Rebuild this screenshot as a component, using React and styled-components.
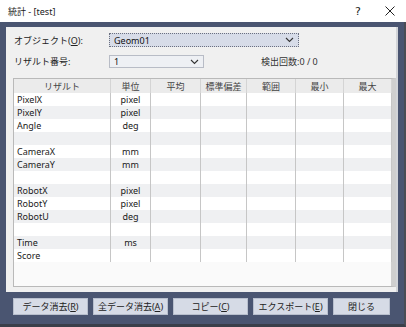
import React from "react";
import styled, { createGlobalStyle } from "styled-components";

const rows = [
  ["PixelX", "pixel"],
  ["PixelY", "pixel"],
  ["Angle", "deg"],
  ["", ""],
  ["CameraX", "mm"],
  ["CameraY", "mm"],
  ["", ""],
  ["RobotX", "pixel"],
  ["RobotY", "pixel"],
  ["RobotU", "deg"],
  ["", ""],
  ["Time", "ms"],
  ["Score", ""],
];

const headers = ["リザルト", "単位", "平均", "標準偏差", "範囲", "最小", "最大"];

const Chevron = () => (
  <svg width="9" height="6" viewBox="0 0 9 6">
    <path d="M1 1 L4.5 4.5 L8 1" fill="none" stroke="#333" strokeWidth="1.1" />
  </svg>
);

const CloseIcon = () => (
  <svg width="10" height="10" viewBox="0 0 10 10">
    <path d="M0.5 0.5 L9.5 9.5 M9.5 0.5 L0.5 9.5" stroke="#222" strokeWidth="1" />
  </svg>
);

export default function App() {
  return (
    <Window>
      <GlobalStyle />
      <TitleBar>
        <Title>統計 - [test]</Title>
        <TitleButtons>
          <TitleButton>?</TitleButton>
          <TitleButton>
            <CloseIcon />
          </TitleButton>
        </TitleButtons>
      </TitleBar>
      <Panel>
        <FormRow>
          <Label>
            オブジェクト(<u>O</u>):
          </Label>
          <Combo $focused $width={190}>
            <span>Geom01</span>
            <Chevron />
          </Combo>
        </FormRow>
        <FormRow $second>
          <Label>リザルト番号:</Label>
          <Combo $width={95}>
            <span>1</span>
            <Chevron />
          </Combo>
          <Count>検出回数:0 / 0</Count>
        </FormRow>
        <Table>
          <Grid>
            {headers.map((h) => (
              <HeadCell key={h}>{h}</HeadCell>
            ))}
            {rows.map((r, i) =>
              headers.map((h, c) => (
                <Cell key={i + h} $alt={i % 2 === 1} $center={c === 1}>
                  {c === 0 ? r[0] : c === 1 ? r[1] : ""}
                </Cell>
              ))
            )}
          </Grid>
        </Table>
      </Panel>
      <Footer>
        <Button $w={75}>
          データ消去(<u>R</u>)
        </Button>
        <Button $w={75}>
          全データ消去(<u>A</u>)
        </Button>
        <Button $w={75}>
          コピー(<u>C</u>)
        </Button>
        <Button $w={75}>
          エクスポート(<u>E</u>)
        </Button>
        <Button $w={57}>閉じる</Button>
      </Footer>
    </Window>
  );
}

const GlobalStyle = createGlobalStyle`
  body {
    margin: 0;
    background: #485470;
    font-family: "Noto Sans", "Noto Sans CJK JP", sans-serif;
    font-size: 9px;
    color: #1a1a1a;
  }
  u { text-underline-offset: 1px; }
`;

const Window = styled.div`
  width: 406px;
  height: 327px;
  display: flex;
  flex-direction: column;
  background: #4a5571;
  box-sizing: border-box;
  border-bottom: 3px solid #3a3f4a;
  border-right: 2px solid #4a4d55;
`;

const TitleBar = styled.div`
  height: 22px;
  background: #ffffff;
  display: flex;
  align-items: center;
  justify-content: space-between;
  padding-left: 8px;
  margin-right: -2px;
`;

const Title = styled.span`
  font-size: 9px;
  color: #222;
`;

const TitleButtons = styled.div`
  display: flex;
  height: 100%;
`;

const TitleButton = styled.div`
  width: 32px;
  display: flex;
  align-items: center;
  justify-content: center;
  font-size: 11px;
  color: #222;
  font-family: "DejaVu Sans", sans-serif;
`;

const Panel = styled.div`
  margin: 5px 6px 0 6px;
  height: 265px;
  background: #f0f0f0;
  box-sizing: border-box;
  padding: 6px 2px 0 7px;
  border-right: 2px solid #d2d4d8;
  display: flex;
  flex-direction: column;
`;

const FormRow = styled.div`
  display: flex;
  align-items: center;
  height: ${(p) => (p.$second ? 13 : 14)}px;
  margin-top: ${(p) => (p.$second ? 8 : 0)}px;
`;

const Label = styled.span`
  width: 95px;
  padding-left: 1px;
  color: #222;
`;

const Combo = styled.div`
  width: ${(p) => p.$width}px;
  height: 100%;
  box-sizing: border-box;
  display: flex;
  align-items: center;
  justify-content: space-between;
  padding: 0 4px 0 4px;
  background: ${(p) => (p.$focused ? "#d7dce8" : "#eef0f4")};
  border: 1px ${(p) => (p.$focused ? "dotted #6b7080" : "solid #b8bcc6")};
  color: #111;
`;

const Count = styled.span`
  margin-left: 57px;
  color: #333;
`;

const Table = styled.div`
  margin-top: 10px;
  width: 383px;
  height: 209px;
  box-sizing: border-box;
  border: 1px solid #b9b9b9;
  border-right-width: 5px;
  border-right-color: #cfcfcf;
  background: #fafafa;
`;

const Grid = styled.div`
  display: grid;
  grid-template-columns: 97px 40px 50px 46px 49px 48px 48px;
  grid-template-rows: 14px repeat(13, 13px);
`;

const HeadCell = styled.div`
  background: #ebebeb;
  border-right: 1px solid #d4d4d4;
  display: flex;
  align-items: center;
  justify-content: center;
  color: #444;
  font-size: 9px;
`;

const Cell = styled.div`
  background: ${(p) => (p.$alt ? "#eff0f2" : "#ffffff")};
  border-right: 1px solid #c6c6c6;
  display: flex;
  align-items: center;
  justify-content: ${(p) => (p.$center ? "center" : "flex-start")};
  padding-left: ${(p) => (p.$center ? 0 : 3)}px;
  color: #1a1a1a;
  white-space: nowrap;
  overflow: hidden;
`;

const Footer = styled.div`
  display: flex;
  gap: 5px;
  padding: 6px 0 0 13px;
`;

const Button = styled.div`
  width: ${(p) => p.$w}px;
  height: 17px;
  box-sizing: border-box;
  background: #d6dbe6;
  border: 1px solid #b8bfcd;
  display: flex;
  align-items: center;
  justify-content: center;
  color: #222;
  font-size: 9px;
`;
